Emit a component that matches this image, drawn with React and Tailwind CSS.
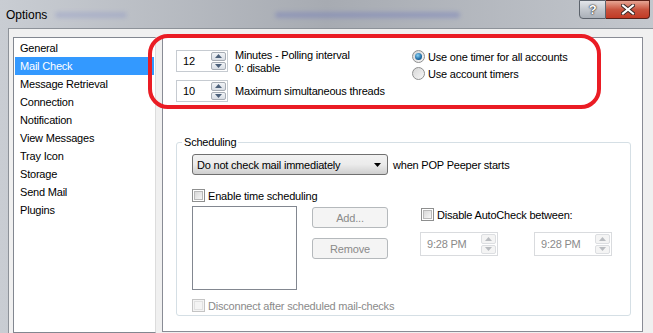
import React from "react";

const FONT = { fontFamily: '"Liberation Sans", Arial, sans-serif' };

const PAGES = [
  "General",
  "Mail Check",
  "Message Retrieval",
  "Connection",
  "Notification",
  "View Messages",
  "Tray Icon",
  "Storage",
  "Send Mail",
  "Plugins",
];

function Arrow({ up, disabled }) {
  return (
    <svg width="7" height="4" viewBox="0 0 7 4">
      <path
        d={up ? "M0 4 L3.5 0 L7 4 Z" : "M0 0 L3.5 4 L7 0 Z"}
        fill={disabled ? "#b9bcc0" : "#4c607a"}
      />
    </svg>
  );
}

function Spinner({ value, width, height, disabled }) {
  const btn = disabled
    ? "border-[#dcdee1] bg-[#f4f4f4]"
    : "border-[#a6acb4] bg-gradient-to-b from-[#f1f3f6] to-[#d9dee5]";
  return (
    <div
      className={`flex shrink-0 border ${disabled ? "border-[#d9dbde] text-[#8a8a8a]" : "border-[#c6cbd1] text-black"} bg-white`}
      style={{ width, height }}
    >
      <div className="flex-1 flex items-center pl-[6px]">{value}</div>
      <div className="w-[16px] flex flex-col gap-[1px] py-[1px] pr-[1px]">
        <div className={`flex-1 flex items-center justify-center rounded-[2px] border ${btn}`}>
          <Arrow up disabled={disabled} />
        </div>
        <div className={`flex-1 flex items-center justify-center rounded-[2px] border ${btn}`}>
          <Arrow disabled={disabled} />
        </div>
      </div>
    </div>
  );
}

function Check({ label, disabled }) {
  return (
    <div className={`h-[13px] flex items-center gap-[3px] ${disabled ? "text-[#8a8a8a]" : "text-black"}`}>
      <div className={`w-[13px] h-[13px] border p-[1px] ${disabled ? "border-[#c4c4c4] bg-[#f4f4f4]" : "border-[#8e8f8f] bg-white"}`}>
        <div className={`w-full h-full border ${disabled ? "border-[#e1e1e1] bg-[#f4f4f4]" : "border-[#b9b9b9] bg-gradient-to-br from-[#d8d8d8] to-[#f6f6f6]"}`} />
      </div>
      <span className="whitespace-nowrap">{label}</span>
    </div>
  );
}

function Radio({ label, checked }) {
  return (
    <div className="h-[13px] flex items-center gap-[3px]">
      <div className="w-[13px] h-[13px] rounded-full border border-[#8e8f8f] bg-gradient-to-br from-[#d6d6d6] to-[#f7f7f7] flex items-center justify-center">
        {checked && (
          <div className="w-[7px] h-[7px] rounded-full bg-[radial-gradient(circle_at_40%_35%,#8ad3f6,#1f6aa3_60%,#0c3d6a)]" />
        )}
      </div>
      <span className="whitespace-nowrap">{label}</span>
    </div>
  );
}

function DisabledButton({ label }) {
  return (
    <div className="w-[76px] h-[21px] rounded-[3px] border border-[#b5b9bc] bg-[#f4f4f4] text-[#8a8a8a] flex items-center justify-center">
      {label}
    </div>
  );
}

export default function App() {
  return (
    <div
      className="w-[653px] h-[333px] overflow-hidden relative bg-gradient-to-r from-[#c9cdd3] via-[#a7abb2] to-[#c3c7cd] text-[11px] leading-[14px] tracking-[-0.2px]"
      style={FONT}
    >
      {/* TITLE BAR */}
      <div className="h-[28px] flex items-start relative">
        <div className="pl-[6px] pt-[8px] text-[12px] tracking-normal text-black">Options</div>
        <div className="ml-[8px] mt-[12px] w-[72px] h-[6px] rounded-full bg-[#8d96c4] opacity-40 blur-[2px]" />
        <div className="absolute left-[275px] top-[12px] w-[185px] h-[6px] rounded-full bg-[#6a74b8] opacity-40 blur-[2px]" />
        <div className="ml-auto mr-[3px] flex">
          <div className="w-[27px] h-[19px] rounded-bl-[4px] border border-[#5c636c] bg-gradient-to-b from-[#e3e6ea] via-[#c3c8ce] to-[#aab0b8] flex items-center justify-center text-white font-bold text-[13px] [text-shadow:0_0_2px_#222,0_0_1px_#000]">
            ?
          </div>
          <div className="w-[44px] h-[19px] rounded-br-[4px] border border-l-0 border-[#5a2018] bg-gradient-to-b from-[#e6a594] via-[#c9543f] to-[#c23a24] flex items-center justify-center">
            <svg width="14" height="11" viewBox="0 0 14 11">
              <path d="M2 1.5 L12 9.5 M12 1.5 L2 9.5" stroke="#3a2a28" strokeWidth="4" strokeLinecap="square" />
              <path d="M2 1.5 L12 9.5 M12 1.5 L2 9.5" stroke="#ffffff" strokeWidth="2" strokeLinecap="square" />
            </svg>
          </div>
        </div>
      </div>

      {/* CLIENT AREA */}
      <div className="ml-[8px] h-[305px] bg-[#f0f0f0] border-l border-t border-[#8d9299] flex items-start">
        {/* PAGE LIST */}
        <div className="ml-[4px] mt-[8px] w-[143px] h-[296px] bg-white border border-[#828790] border-r-[#dcdcdc] p-[1px] flex flex-col">
          {PAGES.map((p) => (
            <div
              key={p}
              className={`h-[18px] flex items-center pl-[5px] ${p === "Mail Check" ? "bg-[#3399ff] text-white" : "text-black"}`}
            >
              {p}
            </div>
          ))}
        </div>

        {/* PROPERTY PAGE */}
        <div className="ml-[6px] mt-[8px] w-[481px] h-[295px] bg-white border border-[#898c95] flex flex-col text-black">
          {/* Polling */}
          <div className="h-[64px] flex pl-[13px] pt-[12px] box-content">
            <div className="w-[236px] flex flex-col gap-[8px]">
              <div className="h-[22px] flex items-start gap-[7px]">
                <Spinner value="12" width={52} height={22} />
                <div className="leading-[13px] -mt-[1px]">
                  <div>Minutes - Polling interval</div>
                  <div>0: disable</div>
                </div>
              </div>
              <div className="h-[22px] flex items-center gap-[7px]">
                <Spinner value="10" width={52} height={22} />
                <div>Maximum simultaneous threads</div>
              </div>
            </div>
            <div className="flex flex-col gap-[4px]">
              <Radio label="Use one timer for all accounts" checked />
              <Radio label="Use account timers" />
            </div>
          </div>

          {/* Scheduling */}
          <div className="ml-[13px] mt-[28px] w-[455px] h-[174px] border border-[#d5dfe5] rounded-[3px] relative flex flex-col">
            <div className="absolute left-[5px] -top-[8px] bg-white px-[2px] leading-[14px]">Scheduling</div>
            <div className="h-[21px] flex items-center ml-[15px] mt-[11px] gap-[5px]">
              <div className="w-[196px] h-[21px] rounded-[3px] border border-[#707070] bg-gradient-to-b from-[#f2f2f2] via-[#ebebeb] to-[#cfcfcf] flex items-center pl-[4px] pr-[6px]">
                <span className="flex-1">Do not check mail immediately</span>
                <svg width="7" height="4" viewBox="0 0 7 4">
                  <path d="M0 0 L3.5 4 L7 0 Z" fill="#000" />
                </svg>
              </div>
              <span>when POP Peeper starts</span>
            </div>
            <div className="ml-[15px] mt-[14px]">
              <Check label="Enable time scheduling" />
            </div>
            <div className="h-[84px] flex ml-[15px] mt-[4px]">
              <div className="w-[105px] h-[84px] border border-[#828790] bg-white" />
              <div className="ml-[15px] mt-[1px] flex flex-col gap-[10px]">
                <DisabledButton label="Add..." />
                <DisabledButton label="Remove" />
              </div>
              <div className="ml-[33px] mt-[2px] flex flex-col">
                <Check label="Disable AutoCheck between:" />
                <div className="flex gap-[36px] mt-[11px] -ml-[1px]">
                  <Spinner value="9:28 PM" width={78} height={24} disabled />
                  <Spinner value="9:28 PM" width={78} height={24} disabled />
                </div>
              </div>
            </div>
            <div className="ml-[15px] mt-[9px]">
              <Check label="Disconnect after scheduled mail-checks" disabled />
            </div>
          </div>
        </div>
      </div>

      {/* HIGHLIGHT MARK */}
      <div className="absolute left-[148px] top-[34px] w-[453px] h-[75px] border-[4px] border-[#ea1c24] rounded-[20px] pointer-events-none" />
    </div>
  );
}
